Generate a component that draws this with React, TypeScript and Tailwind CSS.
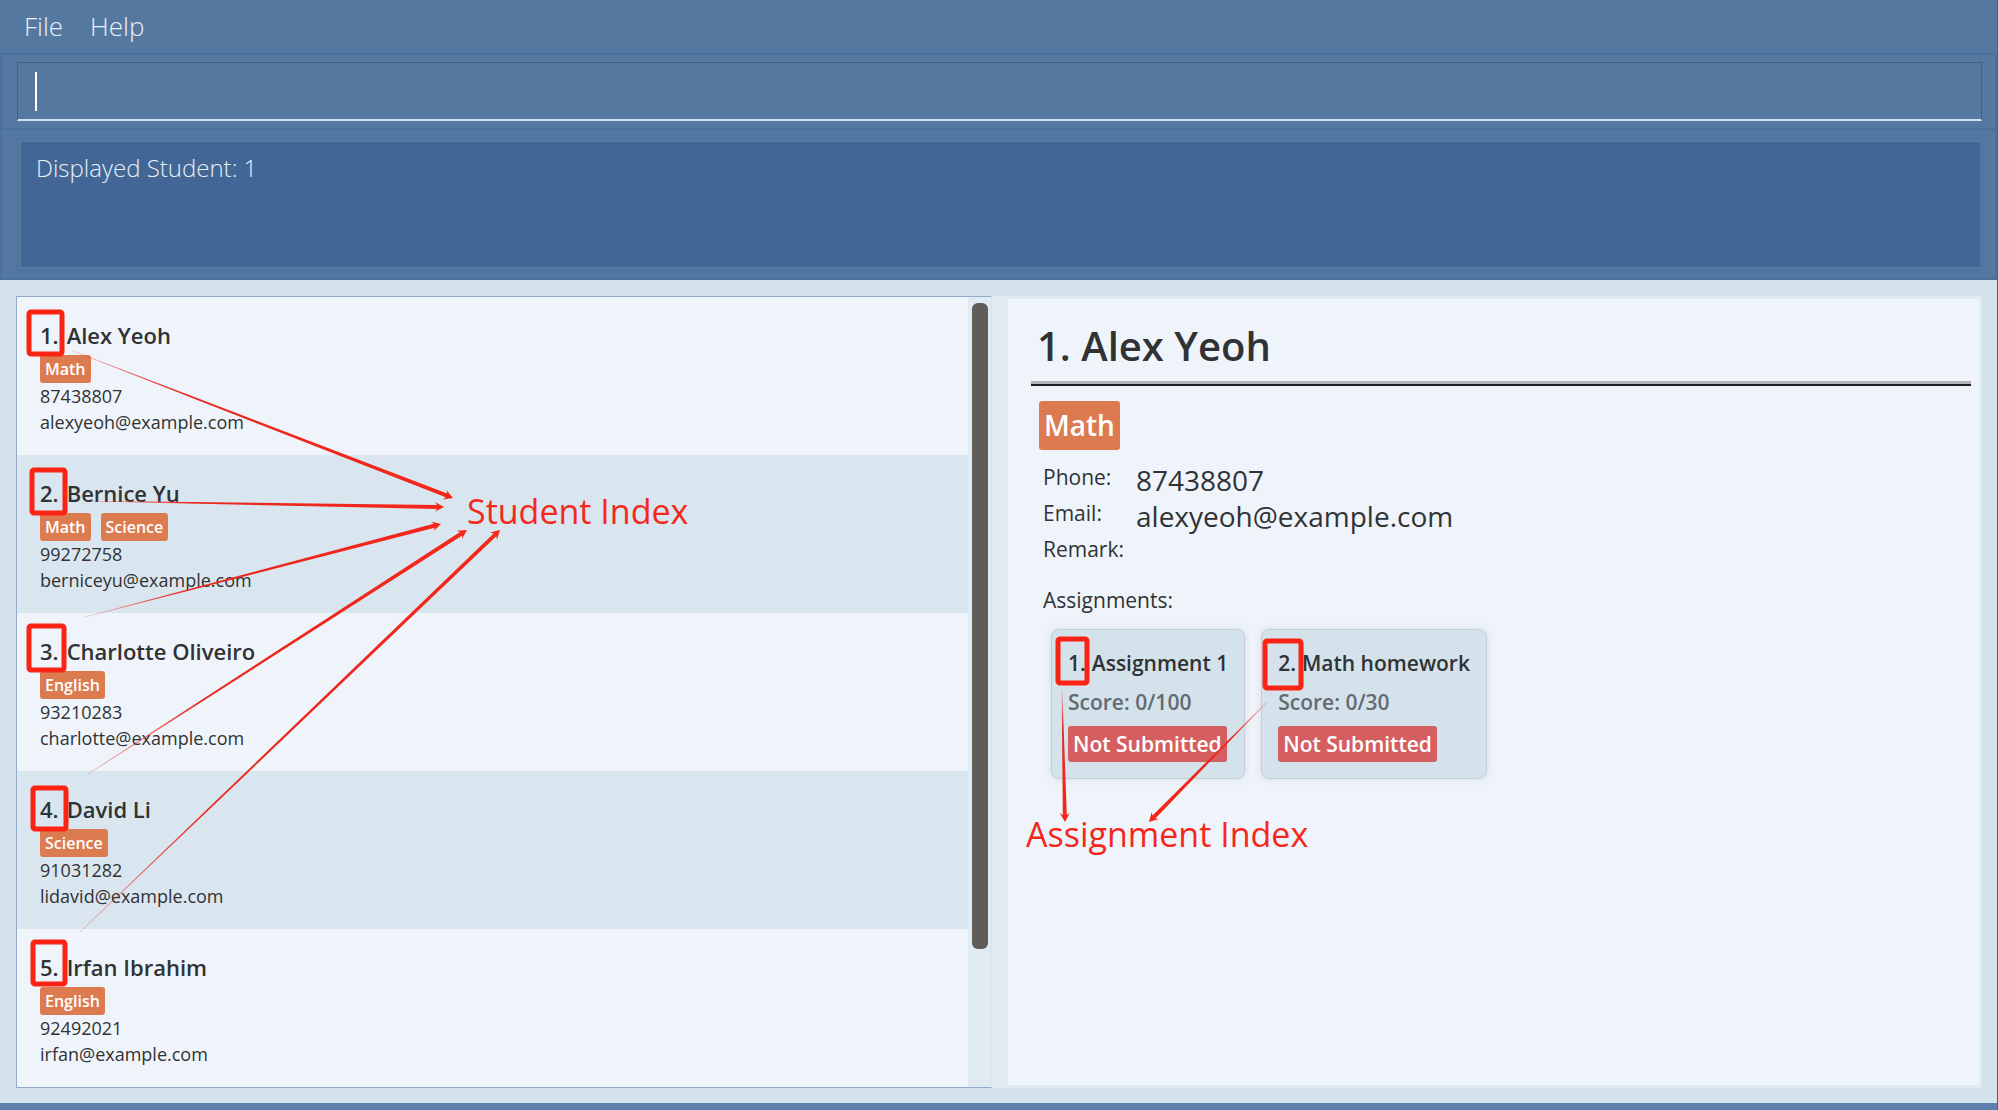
type Student = { name: string; tags: string[]; phone: string; email: string };
type Point = [number, number];

const students: Student[] = [
  { name: "Alex Yeoh", tags: ["Math"], phone: "87438807", email: "alexyeoh@example.com" },
  { name: "Bernice Yu", tags: ["Math", "Science"], phone: "99272758", email: "berniceyu@example.com" },
  { name: "Charlotte Oliveiro", tags: ["English"], phone: "93210283", email: "charlotte@example.com" },
  { name: "David Li", tags: ["Science"], phone: "91031282", email: "lidavid@example.com" },
  { name: "Irfan Ibrahim", tags: ["English"], phone: "92492021", email: "irfan@example.com" },
];

const assignments = [
  { title: "Assignment 1", score: "0/100", status: "Not Submitted" },
  { title: "Math homework", score: "0/30", status: "Not Submitted" },
];

const marks = [
  { x: 29, y: 312, w: 33, h: 42 },
  { x: 32, y: 470, w: 33, h: 43 },
  { x: 29, y: 626, w: 35, h: 44 },
  { x: 33, y: 788, w: 33, h: 41 },
  { x: 33, y: 942, w: 32, h: 42 },
  { x: 1058, y: 639, w: 29, h: 44 },
  { x: 1265, y: 641, w: 36, h: 47 },
];

const arrows: { from: Point; to: Point }[] = [
  { from: [73, 351], to: [453, 498] },
  { from: [85, 501], to: [444, 507] },
  { from: [85, 617], to: [441, 524] },
  { from: [88, 774], to: [467, 530] },
  { from: [80, 932], to: [500, 530] },
  { from: [1062, 690], to: [1065, 822] },
  { from: [1267, 702], to: [1149, 822] },
];

/** Outline of an arrow whose shaft widens from its tail towards its head. */
function arrowPoints([x1, y1]: Point, [x2, y2]: Point) {
  const len = Math.hypot(x2 - x1, y2 - y1);
  const ux = (x2 - x1) / len;
  const uy = (y2 - y1) / len;
  const at = (back: number, side: number) =>
    `${(x2 - ux * back - uy * side).toFixed(1)},${(y2 - uy * back + ux * side).toFixed(1)}`;
  return [at(len, -0.3), at(len, 0.3), at(7, 2), at(9, 5), at(0, 0), at(9, -5), at(7, -2)].join(" ");
}

function Annotations() {
  return (
    <div className="pointer-events-none absolute inset-0 overflow-hidden text-[#f5271b]">
      <svg className="absolute left-0 top-0" width="1998" height="1110" aria-hidden="true">
        <defs>
          {arrows.map(({ from, to }, i) => (
            <linearGradient key={i} id={`fade${i}`} gradientUnits="userSpaceOnUse" x1={from[0]} y1={from[1]} x2={to[0]} y2={to[1]}>
              <stop offset="0" stopColor="#e8281e" stopOpacity="0.3" />
              <stop offset="0.3" stopColor="#e8281e" />
              <stop offset="1" stopColor="#f5271b" />
            </linearGradient>
          ))}
        </defs>
        {marks.map((m, i) => (
          <rect key={i} x={m.x} y={m.y} width={m.w} height={m.h} rx="2" fill="none" stroke="#fb2314" strokeWidth="5" />
        ))}
        {arrows.map(({ from, to }, i) => (
          <polygon key={i} points={arrowPoints(from, to)} fill={`url(#fade${i})`} />
        ))}
      </svg>
      <span className="absolute left-[467px] top-[487px] text-[34px] leading-[48px]">Student Index</span>
      <span className="absolute left-[1026px] top-[810px] text-[34px] leading-[48px]">Assignment Index</span>
    </div>
  );
}

function StudentCard({ student, index }: { student: Student; index: number }) {
  return (
    <li className="h-[158px] px-[23px] pt-5 odd:bg-[#eff4fb] even:bg-[#dae6ef]">
      <h2 className="flex h-[38px] gap-2 text-[22px] font-semibold leading-9">
        <span>{index}.</span>
        <span>{student.name}</span>
      </h2>
      <div className="flex gap-[10px]">
        {student.tags.map((tag) => (
          <span key={tag} className="h-7 rounded-[3px] bg-[#dc7b50] px-[5px] text-base font-semibold leading-7 text-white">
            {tag}
          </span>
        ))}
      </div>
      <p className="text-[18px] leading-[26px]">{student.phone}</p>
      <p className="text-[18px] leading-[26px]">{student.email}</p>
    </li>
  );
}

function Details() {
  return (
    <section className="border-x-2 border-y-[3px] border-[#e0eaf3] bg-[#eff4fb] pl-[23px] pr-[9px] pt-[17px]">
      <h1 className="h-[65px] pl-[6px] text-[40px] font-semibold leading-[60px]">1. Alex Yeoh</h1>
      <hr className="h-[5px] border-t-[3px] border-[#b4b4b7] bg-[#1c1c1e]" />
      <div className="mt-[15px] flex pl-2">
        <span className="h-[49px] rounded-[3px] bg-[#dc7b50] px-[5px] text-[28px] font-semibold leading-[49px] text-white">Math</span>
      </div>
      <dl className="mt-[9px] grid grid-cols-[93px_1fr] pl-3">
        <dt className="text-[21px] leading-9">Phone:</dt>
        <dd className="h-9 text-[28px] leading-[42px]">87438807</dd>
        <dt className="text-[21px] leading-9">Email:</dt>
        <dd className="h-9 text-[28px] leading-[42px]">alexyeoh@example.com</dd>
        <dt className="text-[21px] leading-9">Remark:</dt>
        <dd />
      </dl>
      <h2 className="mt-[15px] pl-3 text-[21px] leading-9">Assignments:</h2>
      <ul className="mt-[11px] flex gap-4 pl-5">
        {assignments.map((a, i) => (
          <li key={a.title} className="h-[150px] rounded-lg border border-[#c6cdd4] bg-[#d4e2ec] px-4 pt-[15px] text-[21px] font-semibold shadow-[0_0_8px_rgba(0,0,0,0.1)]">
            <h3 className="flex gap-[6px] leading-9">
              <span>{i + 1}.</span>
              <span>{a.title}</span>
            </h3>
            <p className="mt-[3px] leading-9 text-[#636a70]">Score: {a.score}</p>
            <div className="mt-[6px] flex">
              <span className="h-9 rounded-[3px] bg-[#d55f60] px-[5px] leading-9 text-white">{a.status}</span>
            </div>
          </li>
        ))}
      </ul>
    </section>
  );
}

export default function App() {
  return (
    <div className="relative flex min-h-screen flex-col border-r border-[#4b6670] bg-[#d4e2ec] font-['Open_Sans','Noto_Sans',sans-serif] text-[#303234]">
      <header className="bg-[#5578a1] text-[#e8eff8]">
        <nav className="flex h-[53px] items-start gap-[27px] px-6 pt-2 text-[26px] font-light leading-9">
          <button type="button">File</button>
          <button type="button">Help</button>
        </nav>
        <div className="relative border-2 border-[#4c709e] py-[7px] pl-[15px] pr-[13px]">
          <input
            type="text"
            aria-label="Command"
            className="block h-[59px] w-full border border-b-2 border-[#42607f] border-b-[#cfe0f2] bg-transparent px-4 text-[26px] font-light caret-transparent outline-none"
          />
          <span className="absolute left-[33px] top-[17px] h-[39px] w-[2px] bg-white" />
        </div>
        <div className="border-2 border-t-0 border-[#4c709e] pb-[7px] pl-[15px] pr-[13px] pt-2">
          <output className="block h-[133px] border border-[#4c709e] py-[3px] pl-[3px] pr-px">
            <span className="block h-full bg-[#426695] px-[15px] pt-2 text-[24px] font-light leading-9">Displayed Student: 1</span>
          </output>
        </div>
      </header>
      <main className="grid grow grid-cols-[minmax(0,1fr)_14px_minmax(0,1fr)] pb-[15px] pl-4 pr-[15px] pt-4">
        <div className="flex border border-[#94abc8] border-r-[#d9e5ee]">
          <ul className="min-w-0 flex-1">
            {students.map((s, i) => (
              <StudentCard key={s.email} student={s} index={i + 1} />
            ))}
          </ul>
          <div className="w-[23px] bg-[#e0eaf3] pl-1 pr-[3px] pt-[6px]">
            <div className="h-[646px] rounded-md bg-[#605c59]" />
          </div>
        </div>
        <div className="border-r border-[#d9e5ee] bg-[#e0eaf3]" />
        <Details />
      </main>
      <footer className="h-[7px] bg-[#5e7fab]" />
      <Annotations />
    </div>
  );
}
